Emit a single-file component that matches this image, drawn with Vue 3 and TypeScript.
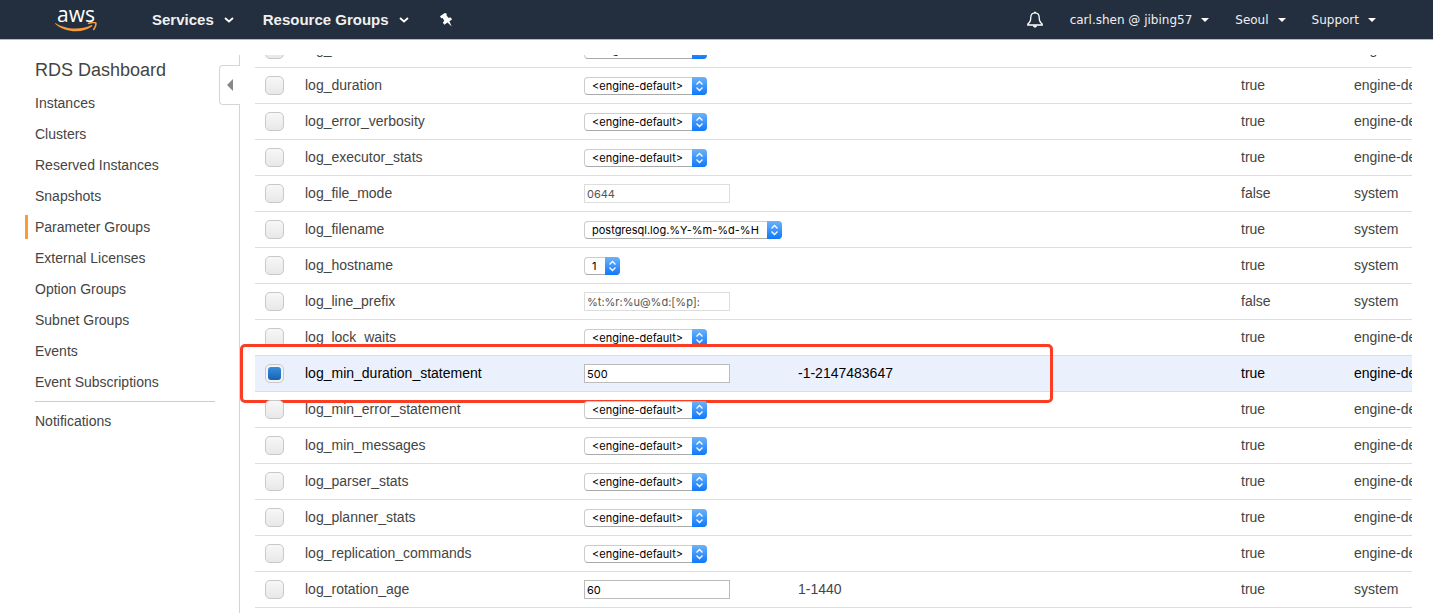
<script setup lang="ts">
import { ref } from 'vue'

type Kind = 'select' | 'text' | 'locked'

interface Param {
  name: string
  kind: Kind
  value: string
  allowed?: string
  modifiable: boolean
  source: string
  checked?: boolean
}

const D = '<engine-default>'

const engine = (name: string): Param => ({
  name,
  kind: 'select',
  value: D,
  modifiable: true,
  source: 'engine-default',
})

const params = ref<Param[]>([
  engine('log_disconnections'),
  engine('log_duration'),
  engine('log_error_verbosity'),
  engine('log_executor_stats'),
  { name: 'log_file_mode', kind: 'locked', value: '0644', modifiable: false, source: 'system' },
  { name: 'log_filename', kind: 'select', value: 'postgresql.log.%Y-%m-%d-%H', modifiable: true, source: 'system' },
  { name: 'log_hostname', kind: 'select', value: '1', modifiable: true, source: 'system' },
  { name: 'log_line_prefix', kind: 'locked', value: '%t:%r:%u@%d:[%p]:', modifiable: false, source: 'system' },
  engine('log_lock_waits'),
  {
    name: 'log_min_duration_statement',
    kind: 'text',
    value: '500',
    allowed: '-1-2147483647',
    modifiable: true,
    source: 'engine-default',
    checked: true,
  },
  engine('log_min_error_statement'),
  engine('log_min_messages'),
  engine('log_parser_stats'),
  engine('log_planner_stats'),
  engine('log_replication_commands'),
  { name: 'log_rotation_age', kind: 'text', value: '60', allowed: '1-1440', modifiable: true, source: 'system' },
])

const links = [
  'Instances',
  'Clusters',
  'Reserved Instances',
  'Snapshots',
  'Parameter Groups',
  'External Licenses',
  'Option Groups',
  'Subnet Groups',
  'Events',
  'Event Subscriptions',
]
const current = 'Parameter Groups'
</script>

<template>
  <div class="app">
    <header class="bar">
      <a href="#" class="logo" aria-label="AWS home">
        <span class="word">aws</span>
        <svg class="smile" width="42" height="11" viewBox="0 0 42 11" aria-hidden="true">
          <path d="M.8 1.200C9 6.800 25 8.600 36 3.200c1.200-.5 1.800.5.8 1.300C28 11.600 10 10.800.4 2c-.5-.5-.1-1.100.4-.8z" fill="#f79a3b" />
          <path d="M33 1.700c2.200-1.400 7-1.600 7.700-.8.700.9-.4 5.200-2.500 6.900" fill="none" stroke="#f79a3b" stroke-width="1.600" />
        </svg>
      </a>
      <nav class="main" aria-label="Main">
        <button type="button">
          Services
          <svg width="10" height="6" viewBox="0 0 10 6" aria-hidden="true"><path d="M1 1l4 3.500L9 1" /></svg>
        </button>
        <button type="button">
          Resource Groups
          <svg width="10" height="6" viewBox="0 0 10 6" aria-hidden="true"><path d="M1 1l4 3.500L9 1" /></svg>
        </button>
        <button type="button" class="pin" aria-label="Pin shortcuts">
          <svg width="16" height="16" viewBox="0 0 16 16" aria-hidden="true">
            <path d="M6.800 1L2 4.300l1.200 2 1.400-.3 1.600 2.600-1.300 2.100 1.400 2 3.200-2.200 4.200 4-2.300-5.200 2.600-1.700-1.300-2.200-2.500.4-1.800-2.700.5-1.300z" />
          </svg>
        </button>
      </nav>
      <nav class="account" aria-label="Account">
        <button type="button" class="bell" aria-label="Notifications">
          <svg width="18" height="18" viewBox="0 0 18 18" aria-hidden="true">
            <path d="M9 1.800c-3 0-4.200 2.200-4.200 4.800 0 3.200-.8 5-3 6.400v1h14.400v-1c-2.200-1.400-3-3.200-3-6.400 0-2.600-1.200-4.800-4.200-4.800z" fill="none" stroke="#fff" stroke-width="1.300" />
            <path d="M7 14.500h4c0 2.700-4 2.700-4 0z" fill="#fff" />
            <path d="M8 .7h2v1.500H8z" fill="#fff" />
          </svg>
        </button>
        <button type="button">carl.shen @ jibing57<i class="caret"></i></button>
        <button type="button">Seoul<i class="caret"></i></button>
        <button type="button">Support<i class="caret"></i></button>
      </nav>
    </header>

    <div class="body">
      <aside class="side">
        <nav aria-label="RDS">
          <a href="#" class="title">RDS Dashboard</a>
          <a v-for="l in links" :key="l" href="#" class="link" :class="{ current: l === current }">{{ l }}</a>
          <hr />
          <a href="#" class="link">Notifications</a>
        </nav>
        <div class="rail">
          <button type="button" class="handle" aria-label="Collapse sidebar"><i></i></button>
        </div>
      </aside>

      <main class="pane">
        <table>
          <colgroup>
            <col class="c-check" />
            <col class="c-name" />
            <col class="c-value" />
            <col />
            <col class="c-mod" />
            <col class="c-src" />
          </colgroup>
          <tbody>
            <tr v-for="p in params" :key="p.name" :class="{ picked: p.checked }">
              <td class="check">
                <input :id="'c-' + p.name" v-model="p.checked" type="checkbox" />
              </td>
              <td class="label"><label :for="'c-' + p.name">{{ p.name }}</label></td>
              <td>
                <span v-if="p.kind === 'select'" class="drop">
                  <select v-model="p.value" :aria-label="p.name + ' value'">
                    <option :value="p.value">{{ p.value }}</option>
                  </select>
                  <svg width="15" height="18" viewBox="0 0 15 18" aria-hidden="true">
                    <path d="M4.500 7.500l3-3 3 3M4.500 10.500l3 3 3-3" />
                  </svg>
                </span>
                <input
                  v-else
                  v-model="p.value"
                  type="text"
                  :disabled="p.kind === 'locked'"
                  :aria-label="p.name + ' value'"
                />
              </td>
              <td class="label">{{ p.allowed }}</td>
              <td class="label">{{ p.modifiable }}</td>
              <td class="label">
                {{ p.source }}<span v-if="p.name === 'log_min_duration_statement'" class="callout"></span>
              </td>
            </tr>
          </tbody>
        </table>
      </main>
    </div>
  </div>
</template>

<style>
body {
  margin: 0;
  background: #fff;
}
</style>

<style scoped>
.app {
  display: flex;
  flex-direction: column;
  height: 100vh;
  overflow: hidden;
  font: 14px/20px "Liberation Sans", Arial, sans-serif;
  color: #444;
}
button {
  font: inherit;
  color: inherit;
  background: none;
  border: 0;
  padding: 0;
}
a {
  color: inherit;
  text-decoration: none;
}
.bar {
  flex: none;
  display: flex;
  align-items: center;
  height: 39px;
  padding: 0 57px 0 55px;
  background: #232f3e;
  border-bottom: 1px solid #b8bcc0;
  color: #f0f0f0;
}
.logo {
  display: flex;
  flex-direction: column;
  align-items: center;
  width: 42px;
  color: #fff;
}
.word {
  font: 500 21px/16px "Open Sans", sans-serif;
}
.smile {
  display: block;
}
.main {
  display: flex;
  align-items: center;
  gap: 29px;
  margin-left: 55px;
  font-size: 15px;
  font-weight: bold;
}
.main button {
  display: flex;
  align-items: center;
  gap: 10px;
}
.main path {
  fill: none;
  stroke: #fff;
  stroke-width: 1.8;
}
.main .pin path {
  fill: #fff;
  stroke: none;
}
.account {
  display: flex;
  align-items: center;
  gap: 26px;
  margin-left: auto;
  font: 12px/20px "DejaVu Sans", Verdana, sans-serif;
}
.account button {
  display: flex;
  align-items: center;
  gap: 9px;
}
.caret {
  border: 4px solid transparent;
  border-top-color: #fff;
  border-bottom: 0;
}
.body {
  flex: 1;
  display: flex;
  min-height: 0;
  padding-top: 15px;
}
.side {
  flex: none;
  display: flex;
  width: 240px;
}
.side nav {
  display: flex;
  flex-direction: column;
  width: 190px;
  margin-left: 25px;
}
.title {
  padding-left: 10px;
  margin-bottom: 6px;
  font-size: 18px;
  line-height: 30px;
}
.link {
  height: 24px;
  line-height: 24px;
  margin-bottom: 7px;
  padding-left: 7px;
  border-left: 3px solid transparent;
}
.link.current {
  border-left-color: #f93;
}
hr {
  width: 180px;
  margin: 0 0 7px 10px;
  border: 0;
  border-top: 1px solid #ccc;
}
.rail {
  width: 20px;
  margin-left: 4px;
  padding-top: 10px;
  border-right: 1px solid #d5d5d5;
}
.handle {
  display: flex;
  align-items: center;
  justify-content: center;
  box-sizing: border-box;
  width: 21px;
  height: 40px;
  background: #fff;
  border: 1px solid #d5d5d5;
  border-right: 0;
  border-radius: 4px 0 0 4px;
}
.handle i {
  border: 6px solid transparent;
  border-right-color: #888;
  border-left: 0;
}
.pane {
  flex: 1;
  min-width: 0;
  padding-left: 15px;
  margin-right: 21px;
  overflow: hidden;
}
table {
  width: 100%;
  margin-top: -23px;
  table-layout: fixed;
  border-collapse: separate;
  border-spacing: 0;
}
.c-check {
  width: 50px;
}
.c-name {
  width: 279px;
}
.c-value {
  width: 214px;
}
.c-mod {
  width: 113px;
}
.c-src {
  width: 58px;
}
tr {
  position: relative;
}
td {
  height: 35px;
  padding: 0;
  border-bottom: 1px solid #ddd;
  white-space: nowrap;
  vertical-align: middle;
}
.label {
  height: 33px;
  padding-bottom: 2px;
}
.check {
  padding-left: 10px;
}
.picked td {
  background: #eaf1fd;
  color: #000;
}
input[type='checkbox'] {
  appearance: none;
  display: block;
  box-sizing: border-box;
  width: 19px;
  height: 19px;
  margin: 0;
  border: 1px solid #c8c8c8;
  border-radius: 5px;
  background: linear-gradient(#f7f7f7, #e8e8e8);
}
input[type='checkbox']:checked {
  padding: 2px;
  background: #f4f4f4;
}
input[type='checkbox']:checked::before {
  content: '';
  display: block;
  width: 13px;
  height: 13px;
  border-radius: 3px;
  background: linear-gradient(#3a8ddd, #1563b5);
}
input[type='text'] {
  display: block;
  box-sizing: border-box;
  width: 146px;
  height: 19px;
  padding: 0 2px;
  border: 1px solid #bbb;
  background: #fff;
  font: 11px/17px Inter, sans-serif;
  color: #000;
}
input[type='text']:disabled {
  border-color: #ddd;
  color: #545454;
}
.drop {
  display: grid;
  width: max-content;
}
.drop select,
.drop svg {
  grid-area: 1 / 1;
}
.drop select {
  appearance: none;
  box-sizing: border-box;
  height: 18px;
  margin: 0;
  padding: 0 22px 0 7px;
  border: 1px solid #ccc;
  border-bottom-color: #aaa;
  border-radius: 4px;
  background: #fff;
  font: 11px/16px Inter, sans-serif;
  color: #000;
}
.drop svg {
  justify-self: end;
  border-radius: 0 4px 4px 0;
  background: linear-gradient(#6cb3fa, #0f78fa);
  pointer-events: none;
}
.drop path {
  fill: none;
  stroke: #fff;
  stroke-width: 1.3;
}
.callout {
  position: absolute;
  inset: -12px 359px -11px -15px;
  border: 3px solid #fb3d24;
  border-radius: 5px;
  pointer-events: none;
}
</style>
